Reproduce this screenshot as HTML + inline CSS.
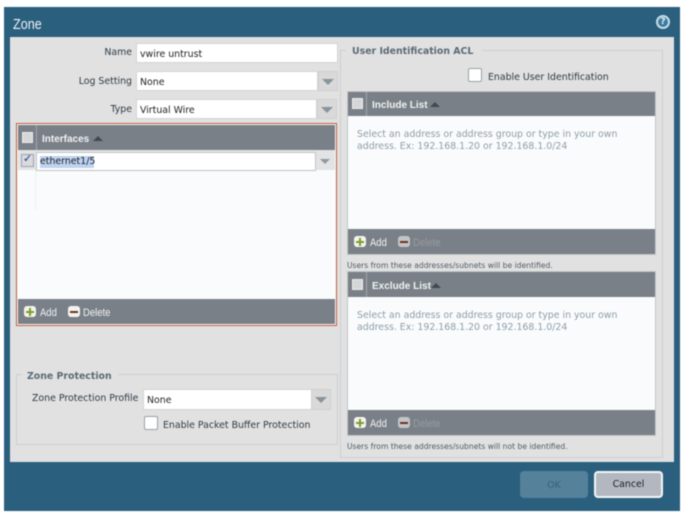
<!DOCTYPE html>
<html><head><meta charset="utf-8"><style>
html,body{margin:0;padding:0;background:#fff;width:693px;height:519px;overflow:hidden}
#r{position:relative;width:693px;height:519px;overflow:hidden;filter:blur(0.4px);font-family:"DejaVu Sans","Liberation Sans",sans-serif;font-size:9.4px;color:#2e3a44}
#r div,#r span{position:absolute;box-sizing:border-box}
#r span{white-space:nowrap;line-height:12px}
.in{background:#fff;border:1px solid #d4d4d4}
.ar{background:#d9d9d9;border:1px solid #cfcfcf}
.ar:after{content:"";position:absolute;left:3px;top:7px;border-left:6px solid transparent;border-right:6px solid transparent;border-top:6px solid #8a949b}
.bar{background:#7a8087}
.w{color:#f1f3f4}
.lb{font-size:10px;font-weight:bold;font-family:'Liberation Sans',sans-serif;color:#f1f3f4}
.ad{font-family:'Liberation Sans',sans-serif;font-size:11px;transform:scaleX(.86);transform-origin:left}
.tri{width:0;height:0;border-left:5px solid transparent;border-right:5px solid transparent;border-bottom:5px solid #3f4a52}
.cb{background:#d4d6d8;border:1px solid #eceded;width:11px;height:11px}
.hint{color:#8c9ea7;font-size:9.4px}
.sm{color:#4f5c65;font-size:7.6px}
.bt{width:12px;height:11px;background:#f3f4ef;border-radius:3px}
.pl{background:#7f9b2a}
.mi{background:#6e2f22}
.dis{background:#c2c5c7}
</style></head><body><div id="r">
<div style="left:4px;top:7px;width:676px;height:504px;background:#2b5f7e"></div>
<div style="left:10px;top:37px;width:664px;height:425px;background:#e1e1e1"></div>
<span style="left:13px;top:16px;font-size:15px;line-height:17px;color:#eef3f6;font-family:'Liberation Sans',sans-serif;transform:scaleX(.84);transform-origin:left">Zone</span>
<div style="left:656px;top:15px;width:14px;height:14px;border-radius:50%;border:2px solid #c5dde9;background:#3d7ca0"></div>
<span style="left:656px;top:16px;width:14px;text-align:center;font-size:9px;font-weight:bold;color:#e4f0f5">?</span>

<span style="right:561px;top:47px">Name</span>
<div class="in" style="left:136px;top:43px;width:202px;height:20px"></div>
<span style="left:140px;top:49px;color:#222">vwire untrust</span>
<span style="right:561px;top:76px">Log Setting</span>
<div class="in" style="left:136px;top:71px;width:182px;height:20px"></div>
<div class="ar" style="left:318px;top:71px;width:20px;height:20px"></div>
<span style="left:140px;top:77px;color:#222">None</span>
<span style="right:561px;top:104px">Type</span>
<div class="in" style="left:136px;top:99px;width:181px;height:20px"></div>
<div class="ar" style="left:317px;top:99px;width:20px;height:20px"></div>
<span style="left:140px;top:105px;color:#222">Virtual Wire</span>

<div style="left:16px;top:123px;width:321px;height:203px;border:1px solid #c25a3c;background:#fafbfd"></div>
<div class="bar" style="left:18px;top:125px;width:317px;height:25px"></div>
<div style="left:36px;top:125px;width:1px;height:25px;background:#a3a8ac"></div>
<div class="cb" style="left:22px;top:132px"></div>
<span class="lb" style="left:42px;top:134px">Interfaces</span>
<div class="tri" style="left:93px;top:136px"></div>
<div style="left:18px;top:150px;width:317px;height:20px;background:#e2e3e4"></div>
<div style="left:21px;top:154px;width:13px;height:13px;background:#d8dade;border:1px solid #9aa3ad"></div>
<span style="left:23px;top:153px;font-size:11px;font-weight:bold;color:#1f2f9a">✓</span>
<div style="left:36px;top:152px;width:280px;height:19px;background:#fff;border:1px solid #bfc2c4"></div>
<div style="left:40px;top:156px;width:54px;height:12px;background:#bcd3f2"></div>
<span style="left:40px;top:156px;color:#222">ethernet1/5</span>
<div style="left:320px;top:159px;border-left:5px solid transparent;border-right:5px solid transparent;border-top:5px solid #8f999f"></div>
<div style="left:35px;top:170px;width:1px;height:40px;background:#eff0f2"></div>
<div class="bar" style="left:18px;top:299px;width:317px;height:25px"></div>
<div class="bt" style="left:24px;top:306px"></div><div class="pl" style="left:26px;top:311px;width:8px;height:2px"></div><div class="pl" style="left:29px;top:308px;width:2px;height:8px"></div>
<span class="w ad" style="left:40px;top:307px">Add</span>
<div class="bt" style="left:68px;top:306px"></div><div class="mi" style="left:70px;top:311px;width:8px;height:2px"></div>
<span class="w ad" style="left:83px;top:307px">Delete</span>

<div style="left:16px;top:374px;width:322px;height:71px;border:1px solid #cfcfcf"></div>
<div style="left:22px;top:370px;width:96px;height:10px;background:#e1e1e1"></div>
<span style="left:27px;top:371px;font-weight:bold;color:#5b6b76">Zone Protection</span>
<span style="left:32px;top:393px">Zone Protection Profile</span>
<div class="in" style="left:143px;top:389px;width:169px;height:21px"></div>
<div class="ar" style="left:311px;top:389px;width:20px;height:21px"></div>
<span style="left:147px;top:395px;color:#222">None</span>
<div style="left:144px;top:416px;width:14px;height:14px;background:#fff;border:1px solid #99a0a6;border-radius:2px"></div>
<span style="left:163px;top:420px">Enable Packet Buffer Protection</span>

<div style="left:340px;top:50px;width:323px;height:408px;border:1px solid #cfcfcf"></div>
<div style="left:346px;top:45px;width:136px;height:12px;background:#e1e1e1"></div>
<span style="left:352px;top:46px;font-weight:bold;color:#5b6b76">User Identification ACL</span>
<div style="left:468px;top:68px;width:14px;height:14px;background:#fff;border:1px solid #99a0a6;border-radius:2px"></div>
<span style="left:488px;top:72px">Enable User Identification</span>

<div style="left:347px;top:91px;width:309px;height:164px;background:#fafbfd;border:1px solid #c4c6c8"></div>
<div class="bar" style="left:348px;top:92px;width:307px;height:24px"></div>
<div style="left:366px;top:92px;width:1px;height:24px;background:#a3a8ac"></div>
<div class="cb" style="left:352px;top:98px"></div>
<span class="lb" style="left:372px;top:100px">Include List</span>
<div class="tri" style="left:430px;top:102px"></div>
<span class="hint" style="left:357px;top:129px">Select an address or address group or type in your own</span>
<span class="hint" style="left:357px;top:141px">address. Ex: 192.168.1.20 or 192.168.1.0/24</span>
<div class="bar" style="left:348px;top:229px;width:307px;height:25px"></div>
<div class="bt" style="left:354px;top:236px"></div><div class="pl" style="left:356px;top:241px;width:8px;height:2px"></div><div class="pl" style="left:359px;top:238px;width:2px;height:8px"></div>
<span class="w ad" style="left:370px;top:237px">Add</span>
<div class="bt dis" style="left:398px;top:236px"></div><div class="mi" style="left:400px;top:241px;width:8px;height:2px"></div>
<span class="ad" style="left:413px;top:237px;color:#969ca1">Delete</span>
<span class="sm" style="left:347px;top:260px">Users from these addresses/subnets will be identified.</span>

<div style="left:347px;top:271px;width:309px;height:165px;background:#fafbfd;border:1px solid #c4c6c8"></div>
<div class="bar" style="left:348px;top:272px;width:307px;height:25px"></div>
<div style="left:366px;top:272px;width:1px;height:25px;background:#a3a8ac"></div>
<div class="cb" style="left:352px;top:279px"></div>
<span class="lb" style="left:372px;top:281px">Exclude List</span>
<div class="tri" style="left:431px;top:283px"></div>
<span class="hint" style="left:357px;top:310px">Select an address or address group or type in your own</span>
<span class="hint" style="left:357px;top:322px">address. Ex: 192.168.1.20 or 192.168.1.0/24</span>
<div class="bar" style="left:348px;top:410px;width:307px;height:25px"></div>
<div class="bt" style="left:354px;top:417px"></div><div class="pl" style="left:356px;top:422px;width:8px;height:2px"></div><div class="pl" style="left:359px;top:419px;width:2px;height:8px"></div>
<span class="w ad" style="left:370px;top:418px">Add</span>
<div class="bt dis" style="left:398px;top:417px"></div><div class="mi" style="left:400px;top:422px;width:8px;height:2px"></div>
<span class="ad" style="left:413px;top:418px;color:#969ca1">Delete</span>
<span class="sm" style="left:347px;top:441px">Users from these addresses/subnets will not be identified.</span>

<div style="left:520px;top:471px;width:68px;height:27px;background:#55819b;border-radius:4px"></div>
<span style="left:520px;top:480px;width:68px;text-align:center;color:#3d6279">OK</span>
<div style="left:594px;top:471px;width:69px;height:27px;background:#b2b7c0;border:2px solid #f4f6f7;border-radius:4px"></div>
<span style="left:594px;top:479px;width:69px;text-align:center;color:#1b1f24">Cancel</span>
</div></body></html>
